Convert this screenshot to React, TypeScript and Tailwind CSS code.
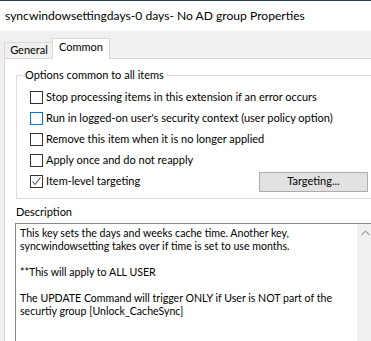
import React from 'react';

const Check: React.FC<{ checked?: boolean; focused?: boolean }> = ({ checked, focused }) => (
  <span
    className={`w-[13px] h-[13px] shrink-0 border bg-white flex items-center justify-center ${
      focused ? 'border-[#0078d7]' : 'border-[#333333]'
    }`}
  >
    {checked && (
      <svg width="11" height="11" viewBox="0 0 11 11">
        <path d="M1.5 5.5 L4 8.5 L9.5 1.5" fill="none" stroke="#555555" strokeWidth="1.1" />
      </svg>
    )}
  </span>
);

const OPTIONS = [
  { label: 'Stop processing items in this extension if an error occurs' },
  { label: "Run in logged-on user's security context (user policy option)", focused: true },
  { label: 'Remove this item when it is no longer applied' },
  { label: 'Apply once and do not reapply' },
];

const App: React.FC = () => {
  return (
    <div className="w-[371px] h-[341px] overflow-hidden bg-[#f0f0f0] text-[11px] text-black font-[Lato,sans-serif]">
      <div className="h-[31px] bg-white border-t border-[#2b3a55] flex items-center pl-[5px] text-[12.1px]">
        syncwindowsettingdays-0 days- No AD group Properties
      </div>

      <div className="pl-[4px] pt-[7px]">
        <div className="flex items-end h-[20px]">
          <div className="w-[48px] h-[16px] border-t border-l border-[#d9d9d9] flex items-center justify-center pl-[1px]">
            General
          </div>
          <div className="w-[58px] h-[21px] -mb-[1px] relative z-10 bg-white border-t border-l border-r border-[#d9d9d9] flex items-center justify-center pb-[3px]">
            Common
          </div>
        </div>

        <div className="w-[400px] h-[300px] bg-white border-t border-l border-[#d9d9d9] pl-[11px] pt-[8px]">
          <fieldset className="w-[380px] border border-[#dcdcdc] pb-[6px]">
            <legend className="ml-[6px] px-[2px] leading-[16px]">Options common to all items</legend>
            <div className="pt-[4px] pl-[13px] flex flex-col">
              {OPTIONS.map((o) => (
                <div key={o.label} className="h-[21px] flex items-center gap-[3px]">
                  <Check focused={o.focused} />
                  <span className="whitespace-nowrap">{o.label}</span>
                </div>
              ))}
              <div className="h-[21px] flex items-center">
                <div className="w-[229px] flex items-center gap-[3px]">
                  <Check checked />
                  <span>Item-level targeting</span>
                </div>
                <div className="w-[109px] h-[20px] bg-[#e1e1e1] border border-[#adadad] flex items-center justify-center">
                  Targeting...
                </div>
              </div>
            </div>
          </fieldset>

          <div className="h-[16px] leading-[16px] mt-[5px] mb-[3px]">Description</div>

          <div className="-ml-[1px] w-[380px] h-[130px] border border-[#828790] border-r-0 flex">
            <div className="w-[341px] pl-[4px] pt-[3px] leading-[13px] text-[10.6px] whitespace-pre">
              {`This key sets the days and weeks cache time. Another key,
syncwindowsetting takes over if time is set to use months.

**This will apply to ALL USER

The UPDATE Command will trigger ONLY if User is NOT part of the
securtiy group [Unlock_CacheSync]`}
            </div>
            <div className="w-[17px] bg-[#f0f0f0] flex justify-center pt-[6px]">
              <svg width="9" height="6" viewBox="0 0 9 6">
                <path d="M0.5 5 L4.5 1 L8.5 5" fill="none" stroke="#a3a3a3" strokeWidth="1.2" />
              </svg>
            </div>
          </div>
        </div>
      </div>
    </div>
  );
};

export default App;
